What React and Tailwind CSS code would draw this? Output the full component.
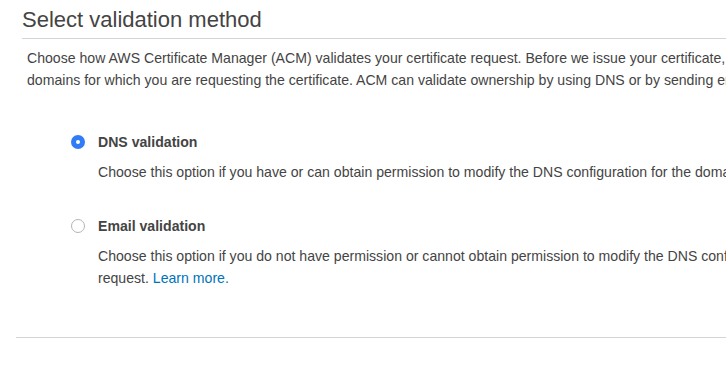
export default function App() {
  return (
    <div className="w-[726px] h-[379px] overflow-hidden bg-white text-[#444] font-['Liberation_Sans',Arial,sans-serif]">
      <div className="ml-[22px] h-[39px] border-b border-[#d5d5d5] pt-[6px]">
        <h2 className="text-[22px] leading-[28px] whitespace-nowrap">Select validation method</h2>
      </div>

      <p className="mt-[8px] ml-[27px] text-[14.1px] leading-[22px] whitespace-nowrap">
        <span className="block">Choose how AWS Certificate Manager (ACM) validates your certificate request. Before we issue your certificate, ACM must validate that you own or control each of the</span>
        <span className="block">domains for which you are requesting the certificate. ACM can validate ownership by using DNS or by sending email to the contact addresses of the domain.</span>
      </p>

      <div className="mt-[40px] ml-[71px] flex flex-col gap-[32px] text-[14.1px] leading-[22px] whitespace-nowrap">
        <div className="flex gap-[13px]">
          <div className="mt-[4px] w-[14px] h-[14px] rounded-full bg-[#2f7cf6] flex items-center justify-center shrink-0">
            <div className="w-[4px] h-[4px] rounded-full bg-white" />
          </div>
          <div>
            <div className="font-bold">DNS validation</div>
            <div className="mt-[8px]">Choose this option if you have or can obtain permission to modify the DNS configuration for the domains in your certificate request. <a className="text-[#0073bb]">Learn more.</a></div>
          </div>
        </div>

        <div className="flex gap-[13px]">
          <div className="mt-[4px] w-[14px] h-[14px] rounded-full border border-[#b5b5b5] bg-white shrink-0" />
          <div>
            <div className="font-bold">Email validation</div>
            <div className="mt-[8px]">
              <span className="block">Choose this option if you do not have permission or cannot obtain permission to modify the DNS configuration for the domains in your certificate</span>
              <span className="block">request. <a className="text-[#0073bb]">Learn more.</a></span>
            </div>
          </div>
        </div>
      </div>

      <div className="mt-[48px] ml-[16px] border-t border-[#d5d5d5]" />
    </div>
  );
}
